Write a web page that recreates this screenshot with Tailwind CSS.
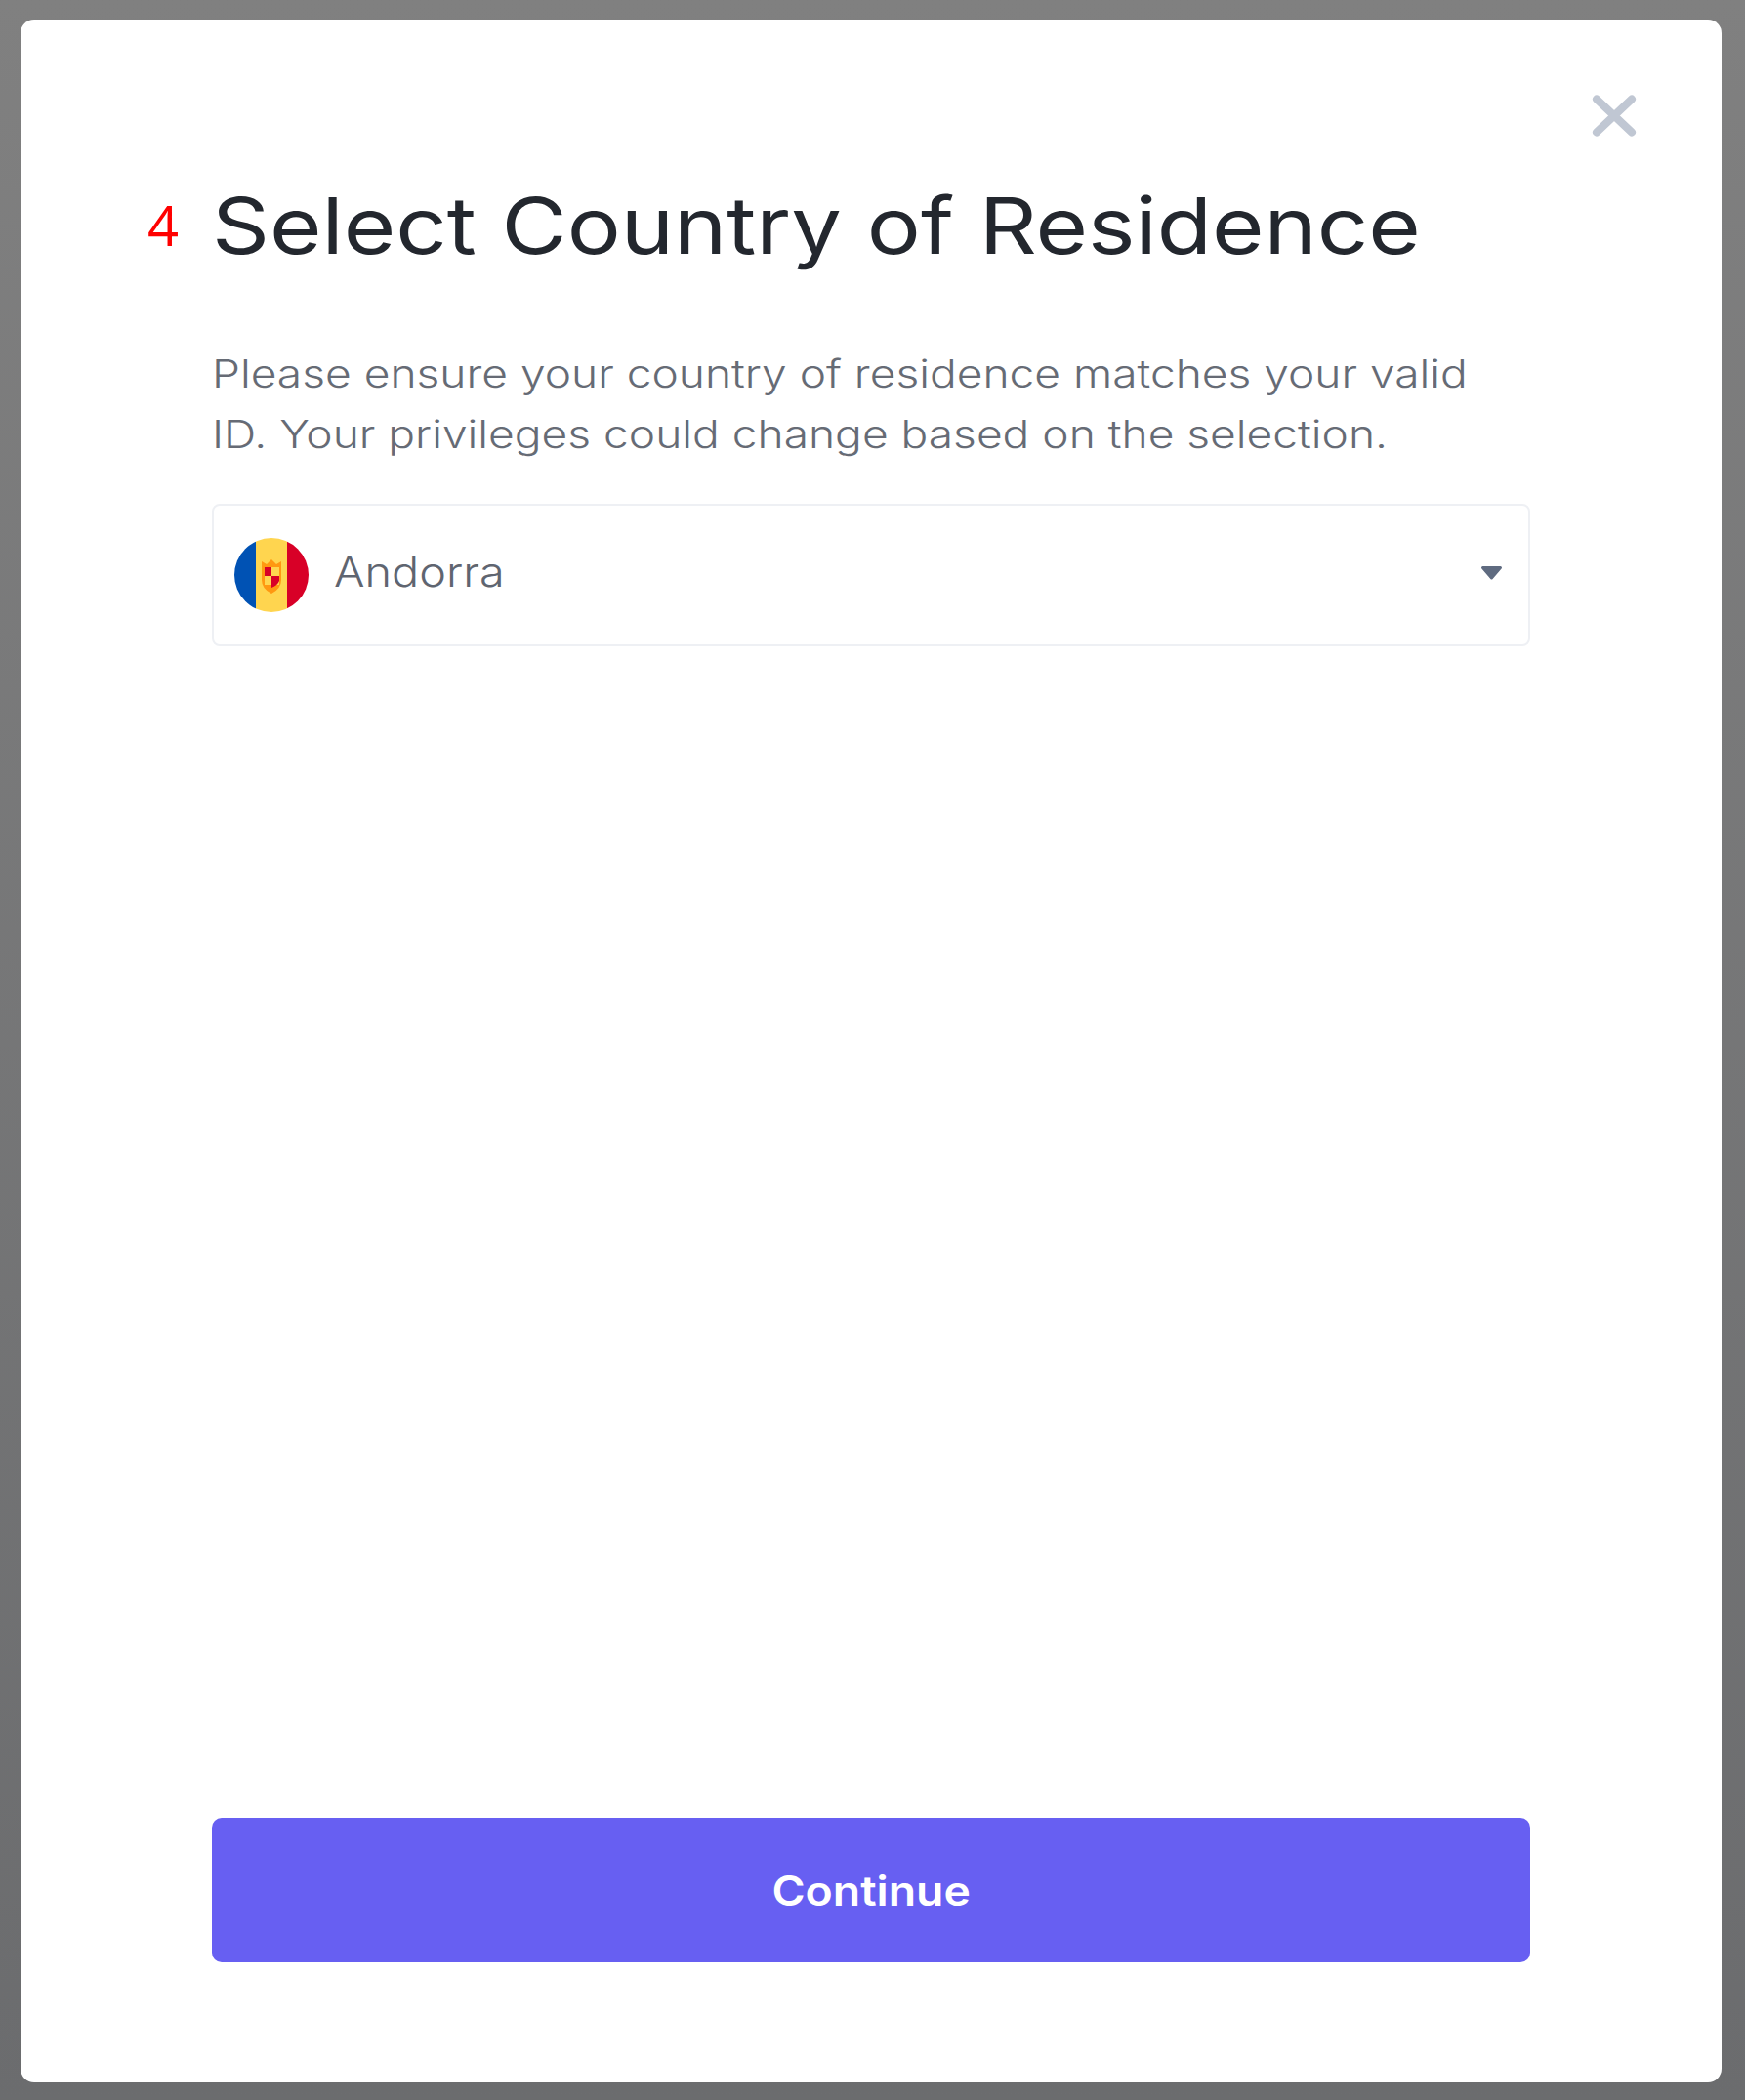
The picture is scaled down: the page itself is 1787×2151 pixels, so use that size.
<!DOCTYPE html>
<html lang="en">
<head>
    <meta charset="UTF-8">
    <title>Select Country of Residence</title>
    <script src="https://cdn.jsdelivr.net/npm/@tailwindcss/browser@4"></script>
</head>
<body class="bg-linear-to-b from-[#808080] to-[#6b6c6e] font-['Inter',sans-serif]">
    <div class="h-[2151px] pt-[20px] pl-[21px]">
        <!-- Modal -->
        <div class="relative w-[1742px] h-[2113px] bg-white rounded-[14px] px-[196px] pt-[161px] pb-[123px] flex flex-col">
            <!-- Close -->
            <button class="absolute left-[1609px] top-[77px] w-[46px] h-[43px]">
                <svg viewBox="0 0 46 43" class="w-full h-full" fill="none" stroke="#c0c7d3" stroke-width="8" stroke-linecap="round">
                    <path d="M5 4.5 41 38.5M41 4.5 5 38.5"/>
                </svg>
            </button>
            <!-- Step number -->
            <span class="absolute left-[130px] top-[172px] text-[56px] leading-[76px] text-[#ff0000] font-['Open_Sans',sans-serif]">4</span>

            <h1 class="h-[100px] origin-left scale-x-[1.148] text-[80px] leading-[100px] font-normal text-[#23272e] whitespace-nowrap">Select Country of Residence</h1>
            <p class="mt-[71px] origin-left scale-x-[1.182] text-[39px] leading-[62px] font-light text-[#666b75] whitespace-nowrap">Please ensure your country of residence matches your valid<br>ID. Your privileges could change based on the selection.</p>

            <!-- Country select -->
            <div class="mt-[40px] h-[146px] flex items-center border-2 border-[#eef0f4] rounded-[8px] pl-[21px] pr-[27px]">
                <svg viewBox="0 0 76 76" class="w-[76px] h-[76px] rounded-full">
                    <rect width="22" height="76" fill="#0052b4"/>
                    <rect x="22" width="32" height="76" fill="#ffd54f"/>
                    <rect x="54" width="22" height="76" fill="#d80027"/>
                    <path d="M28 24l5 3 5-5 5 5 5-3v19q0 9-10 14q-10-5-10-14z" fill="#ff9811"/>
                    <rect x="31" y="30" width="15" height="18" fill="#ffd54f"/>
                    <path d="M31 30h7v9h-7zM38 39h8v5q-2 5-8 7z" fill="#d80027"/>
                </svg>
                <span class="ml-[26px] mb-[8px] origin-left scale-x-[1.114] text-[42px] font-light text-[#5f6570]">Andorra</span>
                <svg viewBox="0 0 21 14" class="ml-auto mb-[4px] w-[21px] h-[14px]">
                    <path d="M1.5 0h18a1.5 1.5 0 0 1 1.1 2.5L11.6 13a1.5 1.5 0 0 1-2.2 0L.4 2.5A1.5 1.5 0 0 1 1.5 0z" fill="#5f6b80"/>
                </svg>
            </div>

            <button class="mt-auto h-[148px] bg-[#675ff2] rounded-[10px] text-white text-[42px] font-semibold">
                <span class="inline-block scale-x-[1.104]">Continue</span>
            </button>
        </div>
    </div>
</body>
</html>
